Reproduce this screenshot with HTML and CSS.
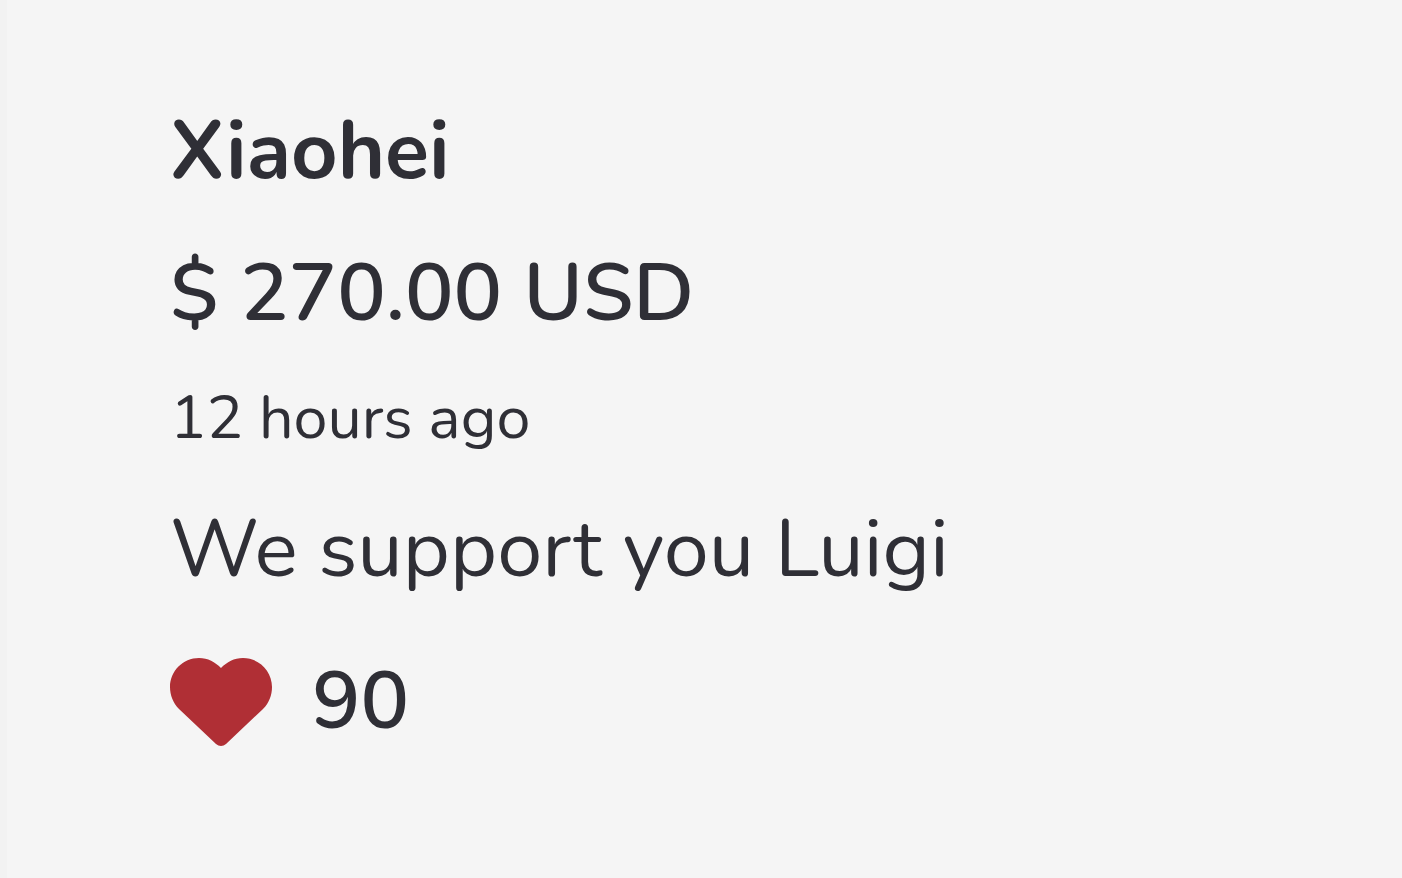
FILE: index.html
```html
<!DOCTYPE html>
<html lang="en">
<head>
  <meta charset="UTF-8">
  <meta name="viewport" content="width=device-width, initial-scale=1.0">
  <title>Donation</title>
  <link rel="stylesheet" href="styles.css">
</head>
<body>

<article class="donation">
  <h1 class="name">Xiaohei</h1>
  <p class="amount">$ 270.00 USD</p>
  <p class="time">12 hours ago</p>
  <p class="comment">We support you Luigi</p>
  <div class="likes">
    <svg class="heart" viewBox="0 0 102 88" aria-hidden="true">
      <path d="M51 10C45 4 38 0 29 0C13 0 0 13 0 29C0 37 3 45 9 51L46 86C49 88.500 53 88.500 56 86L93 51C99 45 102 37 102 29C102 13 89 0 73 0C64 0 57 4 51 10Z"/>
    </svg>
    <span class="count">90</span>
  </div>
</article>

</body>
</html>
```

FILE: styles.css
```css
body {
  margin: 0;
  min-height: 100vh;
  box-sizing: border-box;
  border-left: 7px solid #f2f2f2;
  background: #f5f5f5;
  color: #2f2f36;
  font-family: Nunito, "Open Sans", sans-serif;
}

.donation {
  padding: 102px 163px;
}

.name,
.amount,
.time,
.comment {
  margin: 0;
}

.name,
.amount,
.comment,
.count {
  font-size: 81px;
  line-height: 100px;
}

.name {
  margin-bottom: 42px;
  font-weight: 700;
}

.amount {
  margin-bottom: 36px;
  font-weight: 600;
}

.time {
  margin-bottom: 44px;
  font-size: 61px;
  line-height: 76px;
  font-weight: 400;
}

.comment {
  margin-bottom: 52px;
  font-weight: 400;
}

.likes {
  display: flex;
  align-items: center;
  gap: 40px;
}

.heart {
  width: 102px;
  height: 88px;
  fill: #b02f35;
}

.count {
  font-weight: 600;
}
```
